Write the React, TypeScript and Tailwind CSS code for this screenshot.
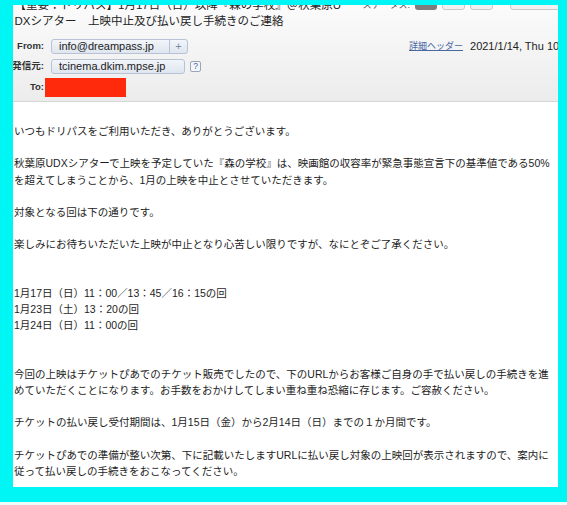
const BODY: string[] = [
    "いつもドリパスをご利用いただき、ありがとうございます。",
    "",
    "秋葉原UDXシアターで上映を予定していた『森の学校』は、映画館の収容率が緊急事態宣言下の基準値である50%",
    "を超えてしまうことから、1月の上映を中止とさせていただきます。",
    "",
    "対象となる回は下の通りです。",
    "",
    "楽しみにお待ちいただいた上映が中止となり心苦しい限りですが、なにとぞご了承ください。",
    "",
    "",
    "1月17日（日）11：00／13：45／16：15の回",
    "1月23日（土）13：20の回",
    "1月24日（日）11：00の回",
    "",
    "",
    "今回の上映はチケットぴあでのチケット販売でしたので、下のURLからお客様ご自身の手で払い戻しの手続きを進",
    "めていただくことになります。お手数をおかけしてしまい重ね重ね恐縮に存じます。ご容赦ください。",
    "",
    "チケットの払い戻し受付期間は、1月15日（金）から2月14日（日）までの１か月間です。",
    "",
    "チケットぴあでの準備が整い次第、下に記載いたしますURLに払い戻し対象の上映回が表示されますので、案内に",
    "従って払い戻しの手続きをおこなってください。",
];

const Label = ({ children }: { children: string }) => (
    <div className="flex w-[29.5px] shrink-0 justify-end text-[9.5px] font-bold text-[#333]">
        {children}
    </div>
);

const Header = () => {
    return (
        <div className="h-[97px] shrink-0 border-b border-[#d5d5d5] bg-linear-to-b from-[#fbfbfb] to-[#ececec] pl-[1.5px] whitespace-nowrap">
            {/* subject, first line is cut by the frame */}
            <div className="-mt-[8px] flex h-[16px] text-[11.5px] leading-[16px] text-[#222]">
                <span className="w-[332px] shrink-0 overflow-hidden">
                    【重要：ドリパス】1月17日（日）以降『森の学校』＠秋葉原U
                </span>
                <span className="ml-[16px] shrink-0 text-[9px] text-[#555]">ステータス:</span>
                <div className="mb-[3px] ml-[5px] h-[15px] w-[22px] shrink-0 self-end rounded-[3px] bg-[#7d7d7d]" />
                <div className="mb-[3px] ml-[5px] h-[15px] w-[23px] shrink-0 self-end rounded-[3px] border border-[#c9c9c9] bg-[#f1f1f1]" />
                <div className="mb-[3px] ml-[5px] h-[15px] w-[23px] shrink-0 self-end rounded-[3px] border border-[#c9c9c9] bg-[#f1f1f1]" />
                <div className="mb-[3px] ml-[17px] h-[15px] w-[60px] shrink-0 self-end rounded-[3px] border border-[#c9c9c9] bg-[#f1f1f1]" />
            </div>
            <div className="h-[16px] text-[11.5px] leading-[16px] text-[#222]">
                DXシアター　上映中止及び払い戻し手続きのご連絡
            </div>

            <div className="mt-[10px] flex h-[15px] items-center">
                <Label>From:</Label>
                <div className="ml-[7px] flex h-[15px] w-[137px] shrink-0 items-center rounded-[3px] border border-[#b7c3d4] bg-linear-to-b from-[#f2f5fa] to-[#dfe6ef] text-[11px] text-[#222]">
                    <span className="w-[117px] pl-[7px]">info@dreampass.jp</span>
                    <span className="flex h-full flex-1 items-center justify-center border-l border-[#b7c3d4] text-[11px] text-[#7b8ba5]">
                        +
                    </span>
                </div>
                <span className="ml-[221px] shrink-0 text-[9px] text-[#4a67a3] underline">詳細ヘッダー</span>
                <span className="ml-[7px] shrink-0 text-[11px] text-[#222]">2021/1/14, Thu 10:38</span>
            </div>

            <div className="mt-[5px] flex h-[15px] items-center">
                <Label>発信元:</Label>
                <div className="ml-[7px] flex h-[15px] w-[134px] shrink-0 items-center rounded-[3px] border border-[#b7c3d4] bg-linear-to-b from-[#f2f5fa] to-[#dfe6ef] pl-[7px] text-[11px] text-[#222]">
                    tcinema.dkim.mpse.jp
                </div>
                <div className="ml-[5px] flex h-[11px] w-[11px] shrink-0 items-center justify-center rounded-[2px] border border-[#9aa6b8] bg-[#f4f6fa] text-[8.5px] leading-none text-[#3a62a8]">
                    ?
                </div>
            </div>

            <div className="mt-[4px] flex h-[19px] items-center">
                <Label>To:</Label>
                <div className="ml-[1px] h-[19px] w-[81px] shrink-0 bg-[#ff2a0c]" />
            </div>
        </div>
    );
};

const App = () => {
    return (
        <div className="h-[505px] w-[567px] overflow-hidden border-b-[3px] border-[#eefbfb] bg-[#00f5f5] pt-[5px] pr-[9px] pb-[15px] pl-[13px] font-['Liberation_Sans','Noto_Sans_CJK_JP',sans-serif]">
            <div className="flex h-full flex-col overflow-hidden bg-white">
                <Header />
                <div className="flex-1 pt-[21px] pl-[1px] text-[10.5px] leading-[16.2px] whitespace-nowrap text-[#1d1d1d]">
                    {BODY.map((line, i) => (
                        <div key={i} className="h-[16.2px]">
                            {line}
                        </div>
                    ))}
                </div>
            </div>
        </div>
    );
};

export default App;
